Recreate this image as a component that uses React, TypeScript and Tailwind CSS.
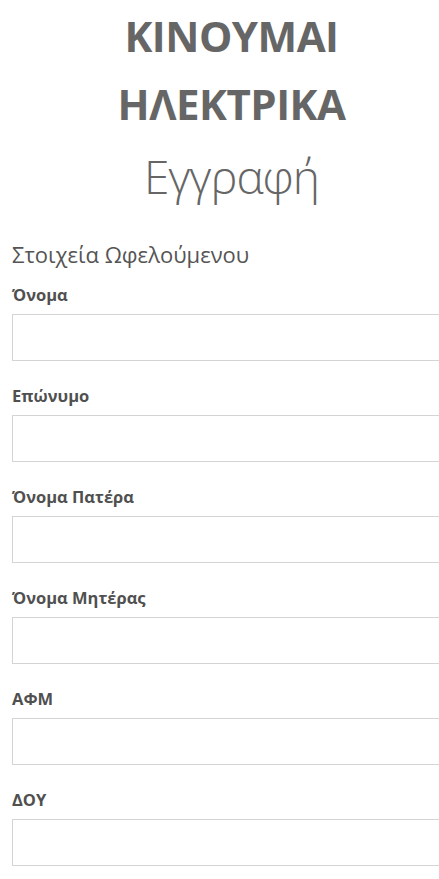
const fields = ["Όνομα", "Επώνυμο", "Όνομα Πατέρα", "Όνομα Μητέρας", "ΑΦΜ", "ΔΟΥ"];

export default function App() {
  return (
    <div
      className="min-h-[879px] w-[439px] overflow-hidden bg-white text-[#5f5f5f]"
      style={{ fontFamily: '"Open Sans", "Noto Sans", sans-serif' }}
    >
      <div className="pl-[24px] pt-[2px] text-center">
        <h1 className="text-[42px] font-bold leading-[68px] tracking-[-0.5px] text-[#666]">
          ΚΙΝΟΥΜΑΙ
          <br />
          ΗΛΕΚΤΡΙΚΑ
        </h1>
        <h2 className="mt-[4px] text-[46px] font-light leading-[68px] tracking-[-1px] text-[#666]">Εγγραφή</h2>
      </div>

      <form className="mt-[29px] px-3">
        <h3 className="text-[22px] font-normal leading-[30px] text-[#555]">Στοιχεία Ωφελούμενου</h3>
        <div className="mt-[16px] flex flex-col gap-[25px]">
          {fields.map((f) => (
            <div key={f}>
              <label className="block text-[16.5px] font-bold leading-[20px] text-[#505050]">{f}</label>
              <input
                type="text"
                className="mt-[9px] block h-[47px] w-[470px] border border-[#d4d4d4] bg-white outline-none"
              />
            </div>
          ))}
        </div>
      </form>
    </div>
  );
}
